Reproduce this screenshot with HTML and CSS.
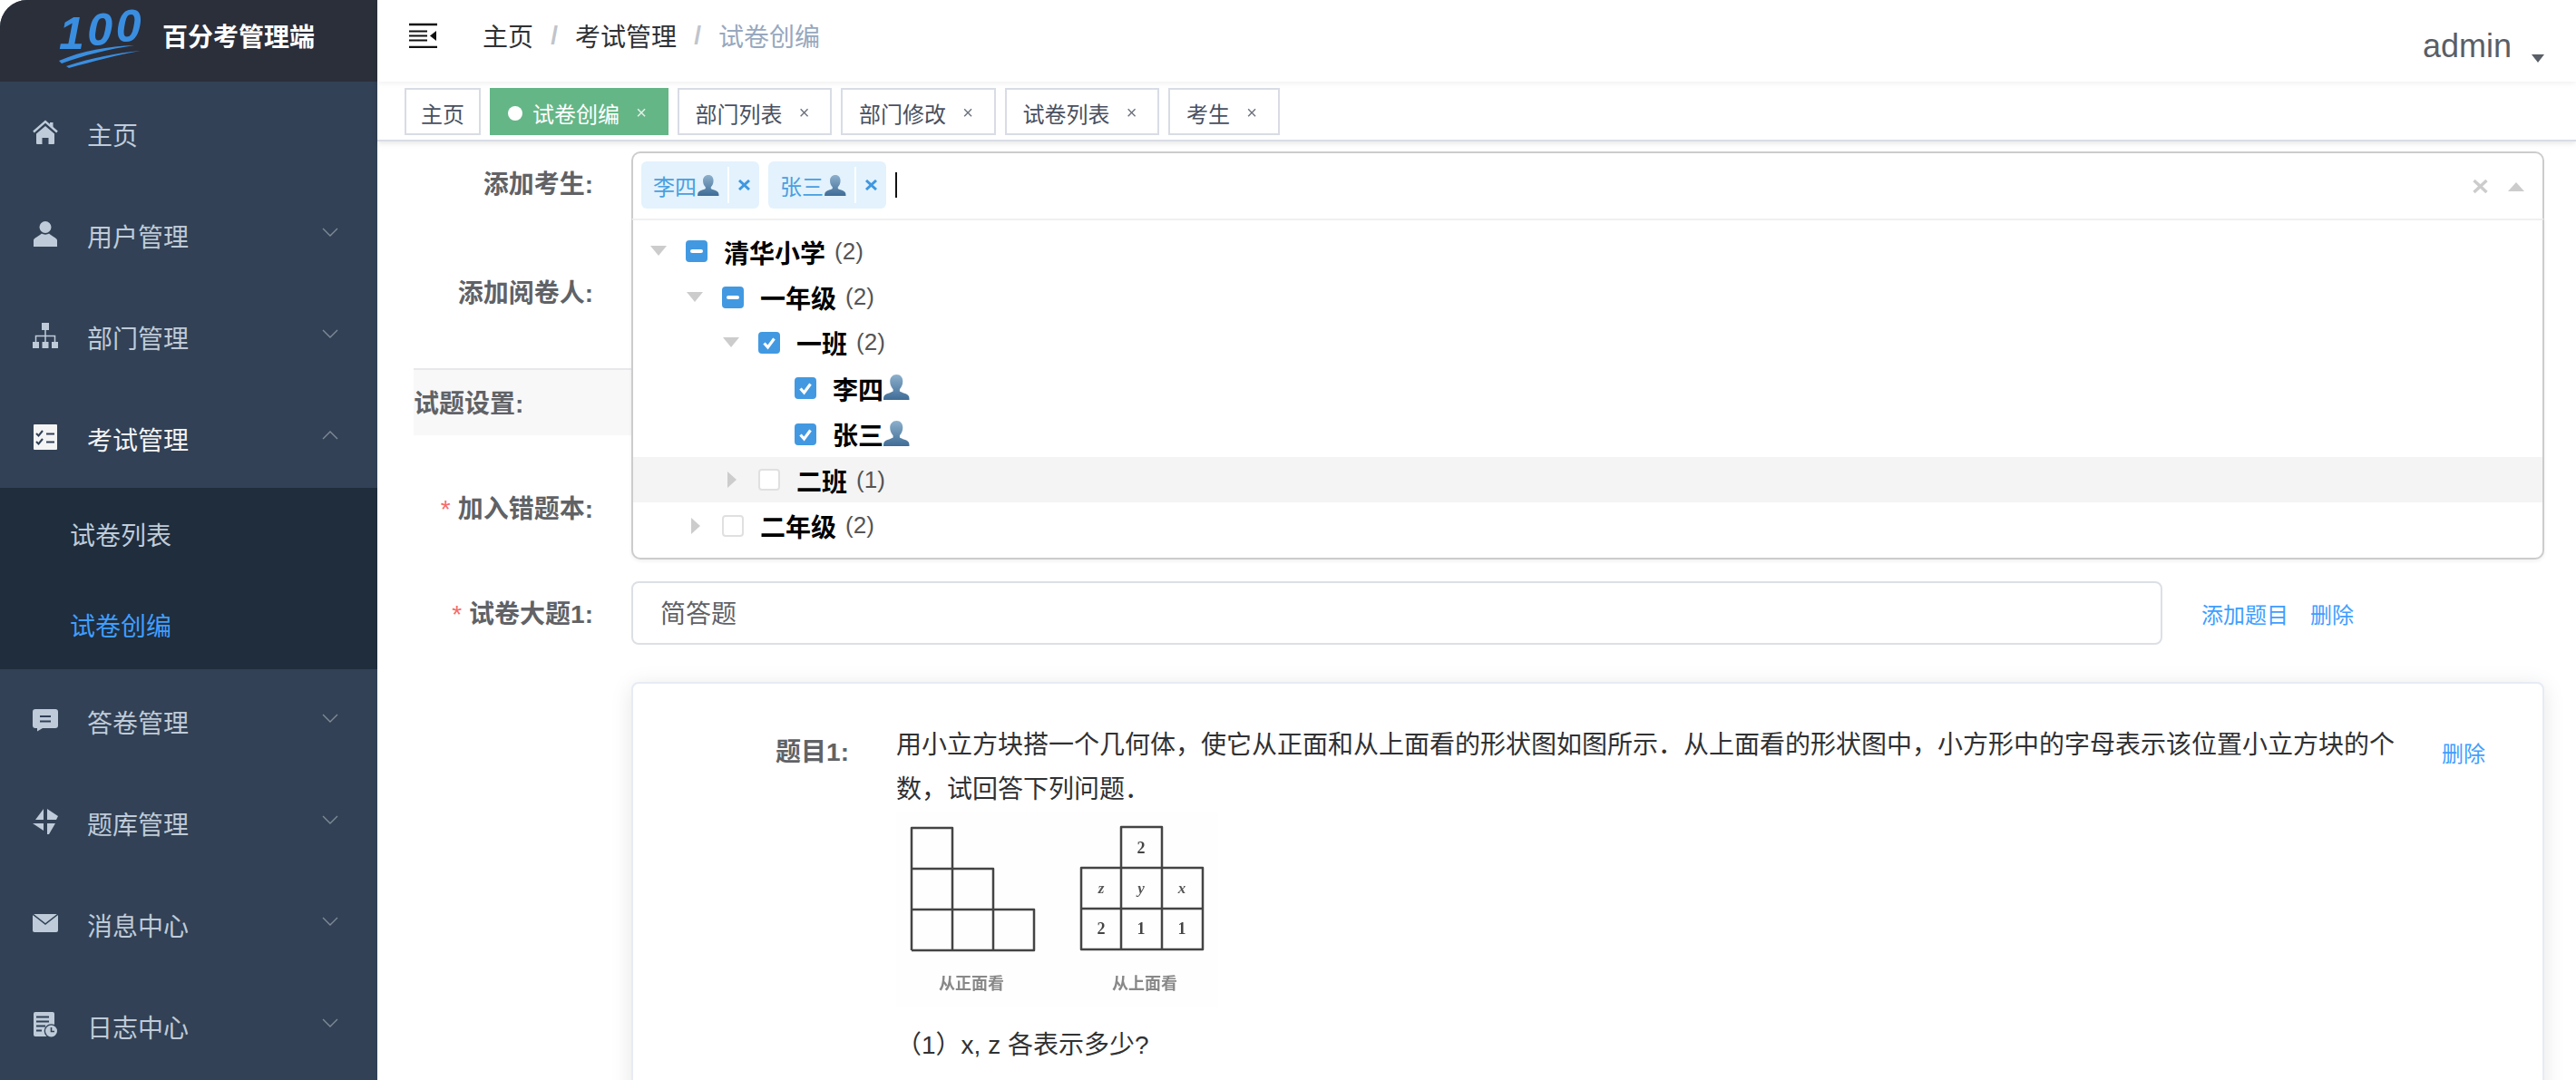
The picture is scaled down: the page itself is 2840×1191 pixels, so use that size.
FILE: index.html
```html
<!DOCTYPE html>
<html lang="zh">
<head>
<meta charset="utf-8">
<title>百分考管理端</title>
<link rel="stylesheet" href="styles.css">
</head>
<body>
<svg class="defs" width="0" height="0" aria-hidden="true">
  <defs>
    <linearGradient id="pg" x1="0" y1="0" x2="0" y2="1">
      <stop offset="0" stop-color="#8db0cc"/>
      <stop offset="1" stop-color="#3f6c96"/>
    </linearGradient>
    <symbol id="person" viewBox="0 0 29 28">
      <path fill="url(#pg)" d="M14.500 0c4.400 0 6.800 3.200 6.800 7.600 0 3.600-1.600 7-3.400 8.600v2.200c2 1.600 8.700 2.400 10.100 5.600.4 1 .5 2.400.5 4H0c0-1.600.1-3 .5-4 1.400-3.200 8.100-4 10.100-5.600v-2.200c-1.800-1.600-3.400-5-3.400-8.600C7.200 3.200 10.100 0 14.500 0z"/>
    </symbol>
    <symbol id="chev" viewBox="0 0 18 10">
      <path d="M1 1l8 8 8-8" fill="none" stroke="#7f8a98" stroke-width="1.400"/>
    </symbol>
    <symbol id="chk" viewBox="0 0 24 24">
      <path d="M6.500 12.500l4 4.500 7-9.500" fill="none" stroke="#fff" stroke-width="3.200"/>
    </symbol>
    <symbol id="cross" viewBox="0 0 13 12">
      <path d="M1 1l11 10M12 1L1 11" fill="none" stroke="#3f97e0" stroke-width="3"/>
    </symbol>
  </defs>
</svg>
<div class="app">
  <aside class="sidebar">
    <div class="brand">
      <svg class="brand-logo" viewBox="0 0 100 76" width="100" height="76">
        <text class="logo-digits" x="5" y="54">1<tspan dy="-4">0</tspan><tspan dy="-4">0</tspan></text>
        <path fill="#3a8ee0" d="M5 67C30 56 60 51 88 50C60 54 32 61 8 70Z"/>
        <path fill="#3a8ee0" d="M13 73C40 64 70 58 95 56C70 60 42 68 16 75Z"/>
      </svg>
      <span class="brand-name">百分考管理端</span>
    </div>
    <nav class="menu">
      <a class="item">
        <svg class="ico" viewBox="0 0 28 28"><path d="M1 13.500L14 2l13 11.500" fill="none" stroke="#bfcbd9" stroke-width="2.400"/><path fill="#bfcbd9" d="M19 3h3.500v6L19 6zM14 7l10 8.500V26a1 1 0 0 1-1 1h-5.500v-7h-7v7H5a1 1 0 0 1-1-1V15.500z"/></svg>
        <span class="label">主页</span>
      </a>
      <a class="item">
        <svg class="ico" viewBox="0 0 28 28"><circle cx="14" cy="6.500" r="6.500" fill="#bfcbd9"/><path fill="#bfcbd9" d="M1 28v-7c0-2.500 6-4.500 9-7.500 2 1.500 6 1.500 8 0 3 3 9 5 9 7.500v7z"/></svg>
        <span class="label">用户管理</span>
        <svg class="chev"><use href="#chev"/></svg>
      </a>
      <a class="item">
        <svg class="ico" viewBox="0 0 28 28"><path fill="#bfcbd9" d="M10 0h8v8h-8zM0 21h7v7H0zM10.500 21h7v7h-7zM21 21h7v7h-7z"/><path d="M14 8v13M3.500 21v-6.500h21V21" fill="none" stroke="#bfcbd9" stroke-width="1.500"/></svg>
        <span class="label">部门管理</span>
        <svg class="chev"><use href="#chev"/></svg>
      </a>
      <a class="item item-open">
        <svg class="ico" viewBox="0 0 28 28"><rect x="1" width="26" height="28" rx="1" fill="#f4f4f5"/><path d="M4 10l2.500 2.500L11 7M4 19l2.500 2.500L11 16" fill="none" stroke="#304156" stroke-width="2"/><path d="M15 10.500h9M15 19.500h9" stroke="#304156" stroke-width="2"/></svg>
        <span class="label">考试管理</span>
        <svg class="chev chev-up"><use href="#chev"/></svg>
      </a>
      <div class="submenu">
        <a class="subitem">试卷列表</a>
        <a class="subitem subitem-on">试卷创编</a>
      </div>
      <a class="item">
        <svg class="ico" viewBox="0 0 28 28"><path fill="#bfcbd9" d="M3 2h22a3 3 0 0 1 3 3v15a3 3 0 0 1-3 3H11l-6 3.500V23H3a3 3 0 0 1-3-3V5a3 3 0 0 1 3-3z"/><path d="M8 10h12M8 15.500h12" stroke="#304156" stroke-width="2"/></svg>
        <span class="label">答卷管理</span>
        <svg class="chev"><use href="#chev"/></svg>
      </a>
      <a class="item">
        <svg class="ico" viewBox="0 0 28 28"><path fill="#bfcbd9" d="M12 0v12H3zM16 0l12 8-2 4H16zM0 16h12v8zM16 16h9l-7 12h-2z"/></svg>
        <span class="label">题库管理</span>
        <svg class="chev"><use href="#chev"/></svg>
      </a>
      <a class="item">
        <svg class="ico" viewBox="0 0 28 28"><rect y="4" width="28" height="20" rx="2" fill="#bfcbd9"/><path d="M0 4l14 11L28 4" fill="none" stroke="#304156" stroke-width="1.500"/></svg>
        <span class="label">消息中心</span>
        <svg class="chev"><use href="#chev"/></svg>
      </a>
      <a class="item">
        <svg class="ico" viewBox="0 0 28 28"><rect x="1" width="23" height="27" rx="2" fill="#bfcbd9"/><path d="M4 5.500h14M4 10.500h14M4 15.500h10M4 20.500h6" stroke="#304156" stroke-width="1.800"/><circle cx="20.500" cy="21" r="7.800" fill="#304156"/><circle cx="20.500" cy="21" r="6.500" fill="#bfcbd9"/><path d="M20.500 17v4.500h3.500" fill="none" stroke="#304156" stroke-width="1.600"/></svg>
        <span class="label">日志中心</span>
        <svg class="chev"><use href="#chev"/></svg>
      </a>
    </nav>
  </aside>

  <main class="main">
    <header class="navbar">
      <svg class="burger" viewBox="0 0 32 28" width="32" height="28"><path d="M1 2h31M1 27h31" stroke="#111" stroke-width="2.500"/><path d="M1 9.500h20M1 14.500h20M1 19.500h20" stroke="#111" stroke-width="2"/><path d="M31 9v11l-7-5.500z" fill="#111"/></svg>
      <div class="crumbs">
        <span class="crumb">主页</span><span class="sep">/</span>
        <span class="crumb">考试管理</span><span class="sep">/</span>
        <span class="crumb crumb-last">试卷创编</span>
      </div>
      <div class="user"><span class="user-name">admin</span><span class="caret"></span></div>
    </header>

    <div class="tags">
      <span class="tag tag-plain">主页</span>
      <span class="tag tag-on"><i class="dot"></i>试卷创编<em class="x">×</em></span>
      <span class="tag">部门列表<em class="x">×</em></span>
      <span class="tag">部门修改<em class="x">×</em></span>
      <span class="tag">试卷列表<em class="x">×</em></span>
      <span class="tag">考生<em class="x">×</em></span>
    </div>

    <section class="content">
      <div class="row row-first">
        <label class="flabel">添加考生:</label>
        <div class="select">
          <div class="select-value">
            <span class="chip">李四<svg class="p-chip"><use href="#person"/></svg><i class="chip-x"><svg class="cross"><use href="#cross"/></svg></i></span>
            <span class="chip">张三<svg class="p-chip"><use href="#person"/></svg><i class="chip-x"><svg class="cross"><use href="#cross"/></svg></i></span>
            <i class="cursor"></i>
            <span class="select-tools">
              <svg width="17" height="15" viewBox="0 0 17 15"><path d="M1.500 1l14 13M15.500 1l-14 13" stroke="#ccc" stroke-width="3.400"/></svg>
              <svg width="18" height="10" viewBox="0 0 18 10"><path d="M9 0l9 10H0z" fill="#ccc"/></svg>
            </span>
          </div>
          <div class="select-menu">
            <div class="opt lv0"><i class="ar ar-down"></i><i class="cb cb-on"><b class="minus"></b></i><span class="nm">清华小学</span><span class="cnt">(2)</span></div>
            <div class="opt lv1"><i class="ar ar-down"></i><i class="cb cb-on"><b class="minus"></b></i><span class="nm">一年级</span><span class="cnt">(2)</span></div>
            <div class="opt lv2"><i class="ar ar-down"></i><i class="cb cb-on"><svg class="tick"><use href="#chk"/></svg></i><span class="nm">一班</span><span class="cnt">(2)</span></div>
            <div class="opt lv3"><i class="ar"></i><i class="cb cb-on"><svg class="tick"><use href="#chk"/></svg></i><span class="nm">李四</span><svg class="p-tree"><use href="#person"/></svg></div>
            <div class="opt lv3"><i class="ar"></i><i class="cb cb-on"><svg class="tick"><use href="#chk"/></svg></i><span class="nm">张三</span><svg class="p-tree"><use href="#person"/></svg></div>
            <div class="opt lv2 opt-hover"><i class="ar ar-right"></i><i class="cb"></i><span class="nm">二班</span><span class="cnt">(1)</span></div>
            <div class="opt lv1"><i class="ar ar-right"></i><i class="cb"></i><span class="nm">二年级</span><span class="cnt">(2)</span></div>
          </div>
        </div>
      </div>

      <div class="row row-second"><label class="flabel">添加阅卷人:</label></div>

      <div class="strip"><span class="strip-title">试题设置:</span></div>

      <div class="row row-wrong"><label class="flabel"><i class="req">*</i>加入错题本:</label></div>

      <div class="row row-big">
        <label class="flabel"><i class="req">*</i>试卷大题1:</label>
        <div class="inputbox">简答题</div>
        <a class="link link-add">添加题目</a>
        <a class="link">删除</a>
      </div>

      <div class="qcard">
        <div class="qlabel">题目1:</div>
        <div class="qbody">
          <p class="qtext">用小立方块搭一个几何体，使它从正面和从上面看的形状图如图所示．从上面看的形状图中，小方形中的字母表示该位置小立方块的个数，试回答下列问题．</p>
          <svg class="figure" viewBox="0 0 355 215" width="355" height="215">
            <rect width="355" height="215" fill="#fefefe"/>
            <path class="fig-line" d="M17 153V18h45v135M17 63h90v90M17 108h135v45H17"/>
            <path class="fig-line" d="M248 62V17h45v45M204 62h134v90H204zM204 107h134M248 62v90M293 62v90"/>
            <text class="fig-num" x="270" y="46">2</text>
            <text class="fig-var" x="226" y="90">z</text>
            <text class="fig-var" x="270" y="90">y</text>
            <text class="fig-var" x="315" y="90">x</text>
            <text class="fig-num" x="226" y="135">2</text>
            <text class="fig-num" x="270" y="135">1</text>
            <text class="fig-num" x="315" y="135">1</text>
            <text class="fig-cap" x="83" y="196">从正面看</text>
            <text class="fig-cap" x="274" y="196">从上面看</text>
          </svg>
          <p class="qtext">（1）x, z 各表示多少?</p>
        </div>
        <a class="link qdel">删除</a>
      </div>
    </section>
  </main>
</div>
</body>
</html>
```
FILE: styles.css
```css
* { box-sizing: border-box; }
html, body { margin: 0; height: 100%; overflow: hidden; background: #fff; }
body { font-family: "Liberation Sans", "Noto Sans CJK SC", sans-serif; }
i, em { font-style: normal; }
.defs { position: absolute; }
.app { display: flex; height: 1191px; }

/* sidebar */
.sidebar { width: 416px; flex: none; background: #324155; border-top-left-radius: 30px; overflow: hidden; }
.brand { height: 90px; background: #2b2f3a; display: flex; align-items: center; padding-left: 60px; gap: 19px; }
.brand-logo { flex: none; align-self: flex-start; }
.logo-digits { font: italic 700 50px "Liberation Sans", sans-serif; fill: #3a8ee0; letter-spacing: 3.500px; }
.brand-name { color: #fff; font-size: 28px; font-weight: 700; margin-bottom: 12px; }
.item { display: flex; align-items: center; height: 112px; padding: 0 43px 0 36px; color: #bfcbd9; font-size: 28px; }
.ico { width: 28px; height: 28px; flex: none; }
.label { margin-left: 32px; flex: 1; padding-top: 4px; }
.item-open .label { color: #f4f4f5; }
.chev { width: 18px; height: 10px; flex: none; margin-top: -4px; }
.chev-up { transform: rotate(180deg); }
.submenu { background: #1f2d3d; }
.subitem { display: block; height: 100px; line-height: 108px; padding-left: 77px; color: #bfcbd9; font-size: 28px; }
.subitem-on { color: #409eff; }

/* main */
.main { flex: 1; min-width: 0; display: flex; flex-direction: column; }
.navbar { height: 90px; flex: none; display: flex; align-items: center; padding: 0 35px 0 34px; position: relative; z-index: 2; background: #fff; box-shadow: 0 2px 6px rgba(0,21,41,.06); }
.burger { flex: none; margin-top: -12px; }
.crumbs { display: flex; align-items: center; margin-left: 50px; margin-top: -12px; font-size: 28px; color: #303133; }
.sep { width: 46px; text-align: center; color: #c0c4cc; font-weight: 700; }
.crumb-last { color: #97a8be; }
.user { margin-left: auto; display: flex; align-items: flex-end; color: #5a5e66; padding-top: 12px; }
.user-name { font-size: 36px; line-height: 42px; }
.caret { width: 0; height: 0; border: 7px solid transparent; border-top: 9px solid #5a5e66; border-bottom: 0; margin: 0 0 3px 22px; }
.tags { height: 66px; flex: none; display: flex; align-items: center; padding: 2px 0 0 30px; gap: 10px; background: #fff; border-bottom: 2px solid #d8dce5; box-shadow: 0 2px 6px rgba(0,0,0,.1); position: relative; z-index: 1; }
.tag { height: 52px; border: 2px solid #d8dce5; padding: 3px 18px 0; font-size: 24px; color: #495060; display: flex; align-items: center; background: #fff; }
.tag-plain { padding: 3px 16px 0; }
.tag-on { background: #64b687; border-color: #64b687; color: #fff; padding-right: 17px; }
.dot { width: 16px; height: 16px; border-radius: 50%; background: #fff; margin-right: 11px; }
.x { font-size: 20px; margin-left: 18px; margin-right: 4.500px; width: 12px; text-align: center; font-weight: 400; opacity: .8; }

/* form */
.content { flex: 1; min-height: 0; padding: 11px 35px 0 40px; overflow: hidden; }
.row { display: flex; align-items: center; }
.flabel { width: 240px; flex: none; padding-right: 42px; padding-bottom: 2px; text-align: right; color: #606266; font-size: 28px; font-weight: 700; }
.req { color: #f56c6c; margin-right: 8px; font-weight: 400; }
.row-first { align-items: flex-start; height: 74px; }
.row-first .flabel { line-height: 74px; padding-bottom: 0; }
.row-second { height: 76px; margin-top: 43px; }
.strip { height: 74px; margin-top: 46px; width: 240px; background: #f8f8f9; border-top: 2px solid #e8e8ec; display: flex; align-items: center; }
.strip-title { color: #606266; font-size: 28px; font-weight: 700; padding-bottom: 2px; }
.row-wrong { height: 76px; margin-top: 42px; }
.row-big { height: 70px; margin-top: 43px; }

/* tree select */
.select { flex: 1; position: relative; z-index: 3; }
.select-value { height: 74px; border: 2px solid #ccc; border-radius: 10px 10px 0 0; border-bottom: 0; display: flex; align-items: flex-start; padding: 9px 0 0 9px; gap: 10px; background: #fff; }
.chip { height: 52px; width: 130px; background: #e3f2fd; color: #4a9fe0; border-radius: 6px; font-size: 24px; display: flex; align-items: center; padding-left: 13px; flex: none; }
.p-chip { width: 24px; height: 23px; margin-left: 1px; flex: none; }
.chip-x { margin-left: auto; width: 35px; height: 40px; border-left: 2px solid #fff; display: flex; align-items: center; justify-content: center; }
.cross { width: 13px; height: 12px; }
.cursor { width: 2px; height: 28px; background: #111; margin-top: 12px; }
.select-tools { margin-left: auto; display: flex; align-items: center; gap: 22px; padding: 20px 20px 0 0; }
.select-menu { position: absolute; left: 0; right: 0; top: 74px; height: 376px; background: #fff; border: 2px solid #ccc; border-radius: 0 0 10px 10px; border-top: 2px solid #f0f0f0; padding-top: 9px; box-shadow: 0 2px 4px rgba(0,0,0,.06); }
.opt { height: 50.4px; display: flex; align-items: center; color: #000; font-size: 28px; }
.lv0 { padding-left: 19px; }
.lv1 { padding-left: 59px; }
.lv2 { padding-left: 99px; }
.lv3 { padding-left: 139px; }
.opt-hover { background: #f4f4f4; }
.ar { width: 20px; height: 18px; flex: none; margin-right: 19px; position: relative; }
.ar-down::before { content: ""; position: absolute; left: 0; top: 3px; border-style: solid; border-width: 11px 9px 0; border-color: #ccc transparent transparent; }
.ar-right::before { content: ""; position: absolute; left: 5px; top: 0; border-style: solid; border-width: 9px 0 9px 10px; border-color: transparent transparent transparent #ccc; }
.cb { width: 24px; height: 24px; flex: none; border-radius: 4px; background: #fff; border: 2px solid #e0e0e0; position: relative; }
.cb-on { background: #4299e1; border-color: #4299e1; }
.minus { position: absolute; left: 3px; top: 8px; width: 14px; height: 4px; border-radius: 2px; background: #fff; }
.tick { position: absolute; left: -2px; top: -2px; width: 24px; height: 24px; }
.nm { font-weight: 700; margin-left: 18px; padding-top: 1px; }
.cnt { color: #555; margin-left: 10px; font-size: 26px; }
.p-tree { width: 29px; height: 28px; margin-top: -2px; }

/* inputs */
.inputbox { width: 1688px; flex: none; height: 70px; border: 2px solid #dcdfe6; border-radius: 8px; display: flex; align-items: center; padding: 0 30px 2px; font-size: 28px; color: #606266; }
.link { color: #409eff; font-size: 24px; margin-left: 24px; }
.link-add { margin-left: 43px; }

/* question card */
.qcard { margin: 41px 0 0 240px; height: 600px; border: 2px solid #e6ebf5; border-radius: 8px; box-shadow: 0 4px 24px rgba(0,0,0,.1); display: flex; align-items: flex-start; padding-top: 43px; background: #fff; }
.qlabel { width: 290px; flex: none; text-align: right; padding-right: 52px; font-size: 28px; font-weight: 700; color: #606266; margin-top: 10px; white-space: nowrap; }
.qbody { width: 1660px; flex: none; }
.qtext { margin: 0; font-size: 28px; line-height: 49px; color: #303133; }
.figure { display: block; margin: 0 0 18px; filter: blur(.6px); }
.fig-line { fill: none; stroke: #444; stroke-width: 2.500; stroke-linejoin: round; }
.fig-num { font: 700 18px "Liberation Serif", serif; fill: #444; text-anchor: middle; }
.fig-var { font: italic 700 17px "Liberation Serif", serif; fill: #555; text-anchor: middle; }
.fig-cap { font: 700 18px "Liberation Serif", "Noto Sans CJK SC", serif; fill: #888; text-anchor: middle; }
.qdel { margin: 15px 0 0 44px; }
```
